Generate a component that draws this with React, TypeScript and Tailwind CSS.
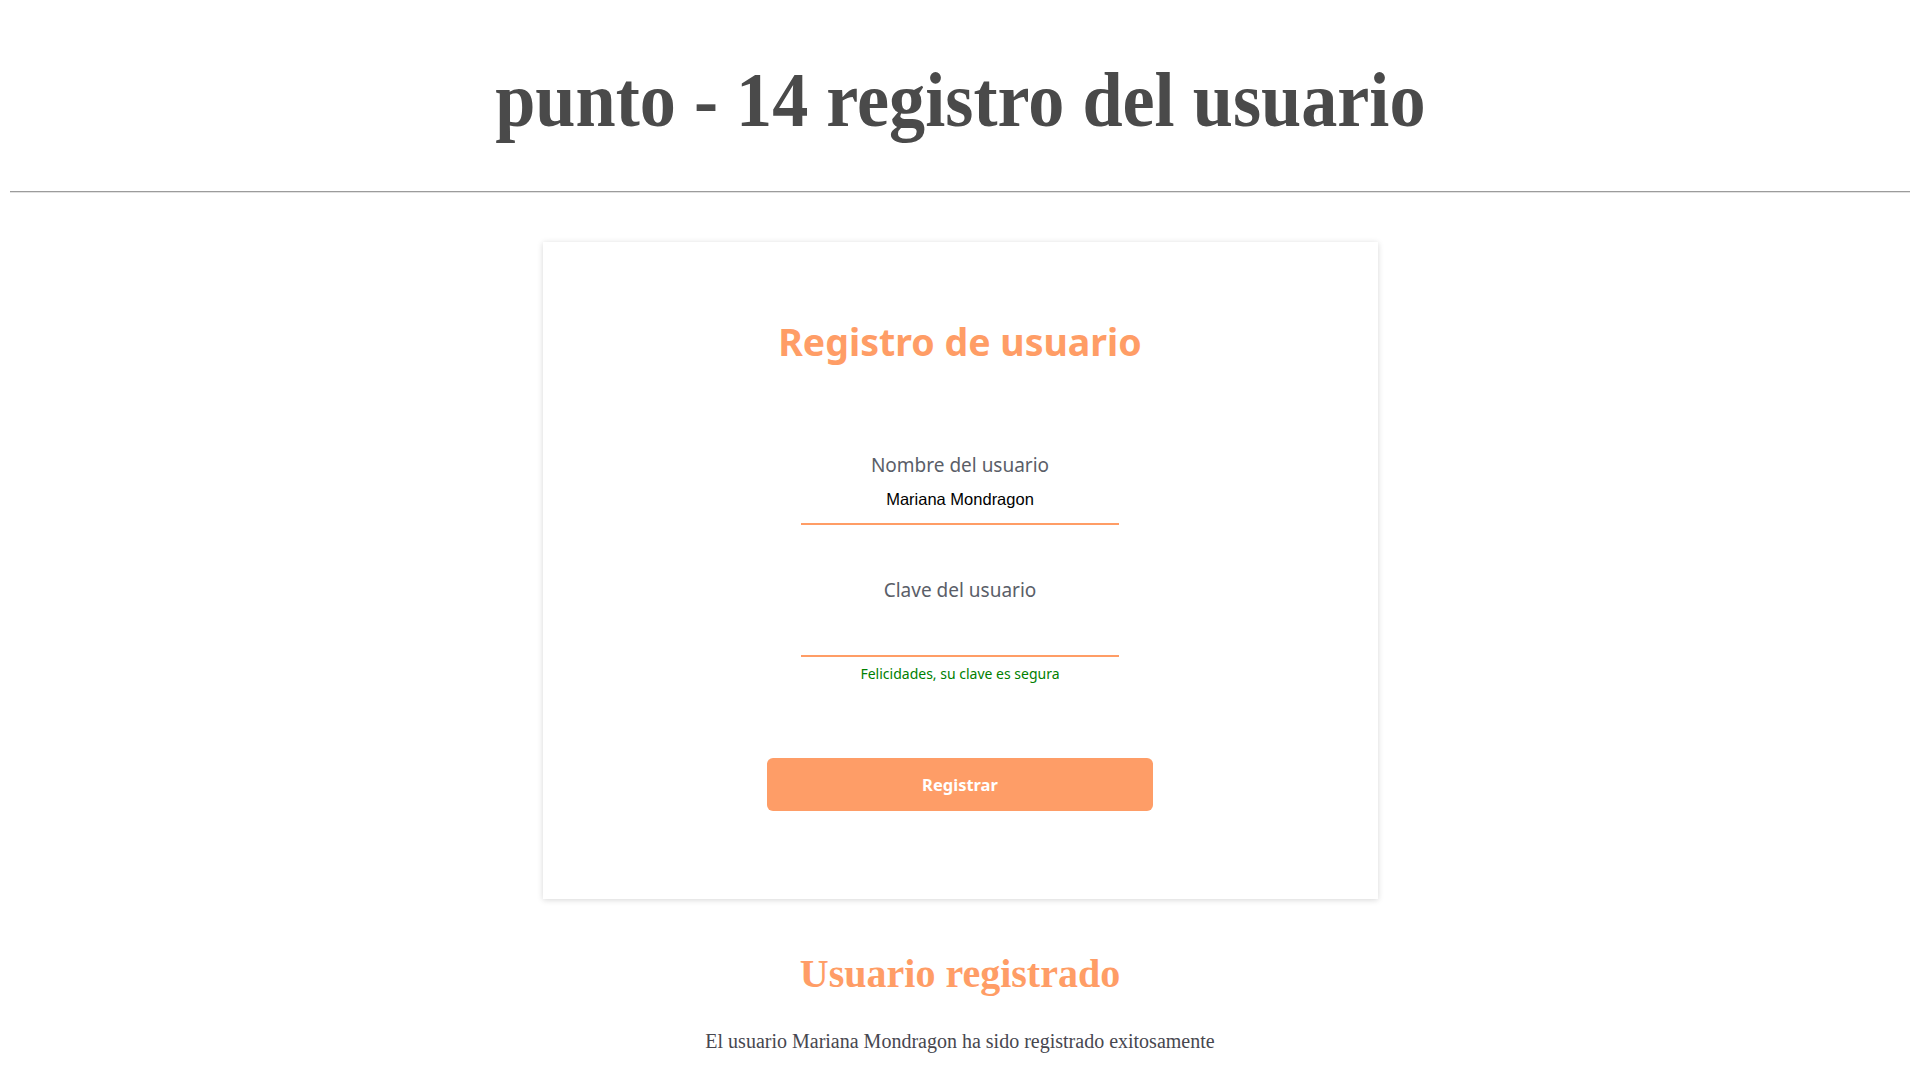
import { useState } from "react";

export default function App() {
    const [nombre, setNombre] = useState("Mariana Mondragon");
    const [clave, setClave] = useState("");

    return (
        <div className="min-h-screen bg-white px-[10px] flex flex-col items-center">
            {/* Title */}
            <h1 className="pt-[61px] text-[78px] leading-[78px] font-bold text-[#4a4a4a] font-['Liberation_Serif',serif] scale-x-[0.926] whitespace-nowrap">
                punto - 14 registro del usuario
            </h1>

            <div className="mt-[52px] w-full border-t border-b border-t-[#9c9c9c] border-b-[#e2e2e2]" />

            {/* Card */}
            <div className="mt-[49px] w-[835px] bg-white shadow-[0_1px_6px_rgba(0,0,0,0.16)] flex flex-col items-center pt-[81px] pb-[88px] font-['Noto_Sans',sans-serif]">
                <h2 className="text-[37.5px] leading-[38px] font-bold text-[#ff9d66]">Registro de usuario</h2>

                <label className="mt-[95px] text-[19px] leading-[19px] text-[#5a5e68]">Nombre del usuario</label>
                <input
                    type="text"
                    value={nombre}
                    onChange={(e) => setNombre(e.target.value)}
                    className="mt-[1px] w-[318px] h-[49px] border-b-2 border-[#ff9d66] text-center text-[16.5px] text-black outline-none font-['Liberation_Sans',Arial,sans-serif]"
                />

                <label className="mt-[56px] text-[19px] leading-[19px] text-[#5a5e68]">Clave del usuario</label>
                <input
                    type="password"
                    value={clave}
                    onChange={(e) => setClave(e.target.value)}
                    className="mt-[8px] w-[318px] h-[49px] border-b-2 border-[#ff9d66] text-center text-[16.5px] outline-none"
                />
                <p className="mt-[10px] text-[14px] leading-[14px] text-[#008000]">Felicidades, su clave es segura</p>

                <button className="mt-[77px] w-[386px] h-[53px] pt-[2px] rounded-[6px] bg-[#fe9d67] text-white text-[16.5px] font-bold">
                    Registrar
                </button>
            </div>

            {/* Result */}
            <h2 className="mt-[55px] text-[40px] leading-[40px] font-bold text-[#ff9d66] font-['Liberation_Serif',serif]">
                Usuario registrado
            </h2>
            <p className="mt-[37px] text-[20px] leading-[20px] text-[#47474f] font-['Liberation_Serif',serif]">
                El usuario {nombre} ha sido registrado exitosamente
            </p>
        </div>
    );
}
